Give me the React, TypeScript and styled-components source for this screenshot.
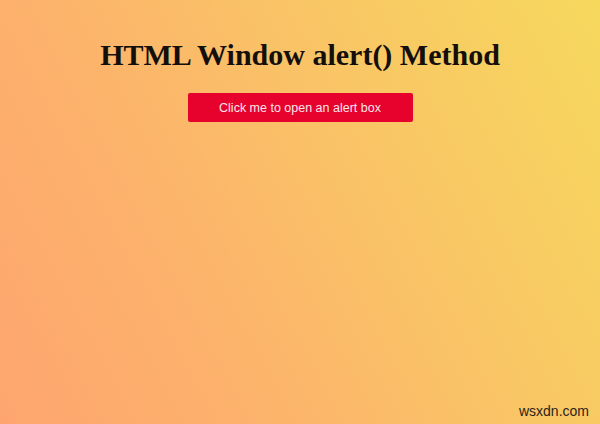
import styled, { createGlobalStyle } from 'styled-components';

const GlobalStyle = createGlobalStyle`
  html, body {
    margin: 0;
    padding: 0;
  }
  body {
    font-family: "Liberation Serif", "Times New Roman", serif;
  }
`

const Page = styled.div`
  position: relative;
  width: 600px;
  height: 424px;
  overflow: hidden;
  display: flex;
  flex-direction: column;
  align-items: center;
  background-image: linear-gradient(62deg, #fea56f, #fcb46b 35%, #f9c665 65%, #f6d85d);
`

const Title = styled.h1`
  margin: 37px 0 0 0;
  font-family: "Liberation Serif", "Times New Roman", serif;
  font-size: 30px;
  font-weight: bold;
  color: #140f0c;
  line-height: 36px;
`

const AlertButton = styled.button`
  margin-top: 20px;
  width: 225px;
  height: 29px;
  border: none;
  border-radius: 2px;
  background: #e6022d;
  color: #f9e6ea;
  font-family: "Liberation Sans", Arial, sans-serif;
  font-size: 12.5px;
  cursor: pointer;
`

const Watermark = styled.div`
  position: absolute;
  right: 11px;
  bottom: 5px;
  font-family: "Liberation Sans", Arial, sans-serif;
  font-size: 14px;
  color: #2a2418;
`

export default function App() {
  return (
    <Page>
      <GlobalStyle />
      <Title>HTML Window alert() Method</Title>
      <AlertButton onClick={() => alert('Hello! I am an alert box!')}>
        Click me to open an alert box
      </AlertButton>
      <Watermark>wsxdn.com</Watermark>
    </Page>
  );
}
